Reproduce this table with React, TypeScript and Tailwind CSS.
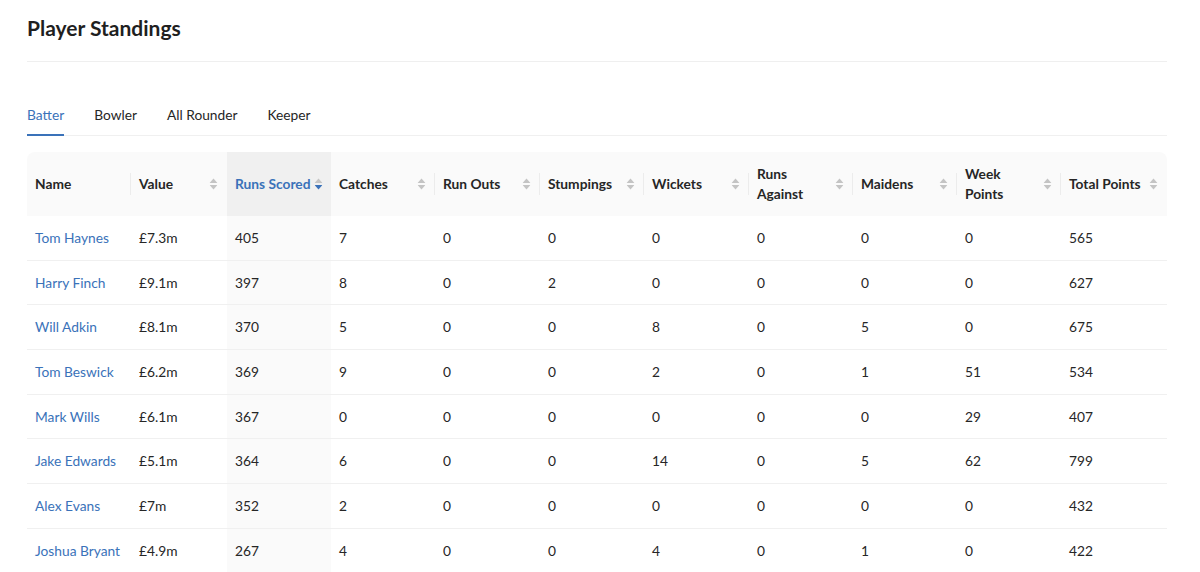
import React from "react";

type Col = { key: string; label: React.ReactNode; sortable: boolean; sorted?: boolean; wrap?: boolean };

const cols: Col[] = [
  { key: "name", label: "Name", sortable: false },
  { key: "value", label: "Value", sortable: true },
  { key: "runs", label: "Runs Scored", sortable: true, sorted: true },
  { key: "catches", label: "Catches", sortable: true },
  { key: "runouts", label: "Run Outs", sortable: true },
  { key: "stumpings", label: "Stumpings", sortable: true },
  { key: "wickets", label: "Wickets", sortable: true },
  { key: "against", label: (<>Runs<br />Against</>), sortable: true, wrap: true },
  { key: "maidens", label: "Maidens", sortable: true },
  { key: "week", label: (<>Week<br />Points</>), sortable: true, wrap: true },
  { key: "total", label: "Total Points", sortable: true },
];

const rows: (string | number)[][] = [
  ["Tom Haynes", "£7.3m", 405, 7, 0, 0, 0, 0, 0, 0, 565],
  ["Harry Finch", "£9.1m", 397, 8, 0, 2, 0, 0, 0, 0, 627],
  ["Will Adkin", "£8.1m", 370, 5, 0, 0, 8, 0, 5, 0, 675],
  ["Tom Beswick", "£6.2m", 369, 9, 0, 0, 2, 0, 1, 51, 534],
  ["Mark Wills", "£6.1m", 367, 0, 0, 0, 0, 0, 0, 29, 407],
  ["Jake Edwards", "£5.1m", 364, 6, 0, 0, 14, 0, 5, 62, 799],
  ["Alex Evans", "£7m", 352, 2, 0, 0, 0, 0, 0, 0, 432],
  ["Joshua Bryant", "£4.9m", 267, 4, 0, 0, 4, 0, 1, 0, 422],
];

const widths = [104, 96, 104, 104, 105, 104, 105, 104, 104, 104, 106];

function Sorter({ active }: { active?: boolean }) {
  return (
    <svg width="9" height="12" viewBox="0 0 9 12" className="shrink-0">
      <path d="M4.5 0.6 L8.2 4.7 Q8.4 5.1 7.9 5.1 L1.1 5.1 Q0.6 5.1 0.8 4.7 Z" fill="#c4c4c4" />
      <path d="M4.5 11.4 L8.2 7.3 Q8.4 6.9 7.9 6.9 L1.1 6.9 Q0.6 6.9 0.8 7.3 Z" fill={active ? "#3a72b9" : "#c4c4c4"} />
    </svg>
  );
}

export default function App() {
  return (
    <div
      className="bg-white w-[1200px] h-[572px] overflow-hidden text-[#262626]"
      style={{ fontFamily: "Lato, 'Open Sans', sans-serif" }}
    >
      <div className="ml-[27px] w-[1140px]">
        <h1 className="pt-[15px] text-[21px] leading-[25px] font-bold text-[#1f1f1f]">Player Standings</h1>
        <div className="mt-[21px] h-px bg-[#efefef]" />
        <div className="mt-[42px] flex gap-[30px] border-b border-[#f0f0f0] text-[13.75px] leading-[22px]">
          {["Batter", "Bowler", "All Rounder", "Keeper"].map((t, i) => (
            <div
              key={t}
              className={
                "pb-[8px] -mb-px border-b-2 " +
                (i === 0 ? "border-[#3a72b9] text-[#3a72b9]" : "border-transparent text-[#262626]")
              }
            >
              {t}
            </div>
          ))}
        </div>
        <table className="mt-[16px] w-[1140px] table-fixed border-separate border-spacing-0 text-[13.75px] leading-[20px]">
          <colgroup>
            {widths.map((w, i) => (
              <col key={i} style={{ width: w }} />
            ))}
          </colgroup>
          <thead>
            <tr>
              {cols.map((c, i) => (
                <th
                  key={c.key}
                  className={
                    "relative h-[64px] pl-[8px] pr-[9px] text-left font-bold align-middle " +
                    (c.sorted ? "bg-[#f0f0f0] text-[#3a72b9] " : "bg-[#fafafa] text-[#262626] ") +
                    (i === 0 ? "rounded-tl-[8px] " : "") +
                    (i === cols.length - 1 ? "rounded-tr-[8px]" : "")
                  }
                >
                  <div className="flex items-center gap-[4px]">
                    <span className={"flex-1 " + (c.wrap ? "" : "whitespace-nowrap")}>{c.label}</span>
                    {c.sortable && <Sorter active={c.sorted} />}
                  </div>
                  {i < cols.length - 1 && !c.sorted && !cols[i + 1].sorted && (
                    <span className="absolute right-0 top-1/2 -translate-y-1/2 h-[22px] w-px bg-[#ececec]" />
                  )}
                </th>
              ))}
            </tr>
          </thead>
          <tbody>
            {rows.map((r, ri) => (
              <tr key={ri}>
                {r.map((v, ci) => (
                  <td
                    key={ci}
                    className={
                      "h-[44.7px] px-[8px] py-0 border-b border-[#f0f0f0] align-middle " +
                      (ci === 2 ? "bg-[#fafafa] " : "") +
                      (ci === 0 ? "text-[#3a72b9]" : "text-[#262626]")
                    }
                  >
                    {v}
                  </td>
                ))}
              </tr>
            ))}
          </tbody>
        </table>
      </div>
    </div>
  );
}
